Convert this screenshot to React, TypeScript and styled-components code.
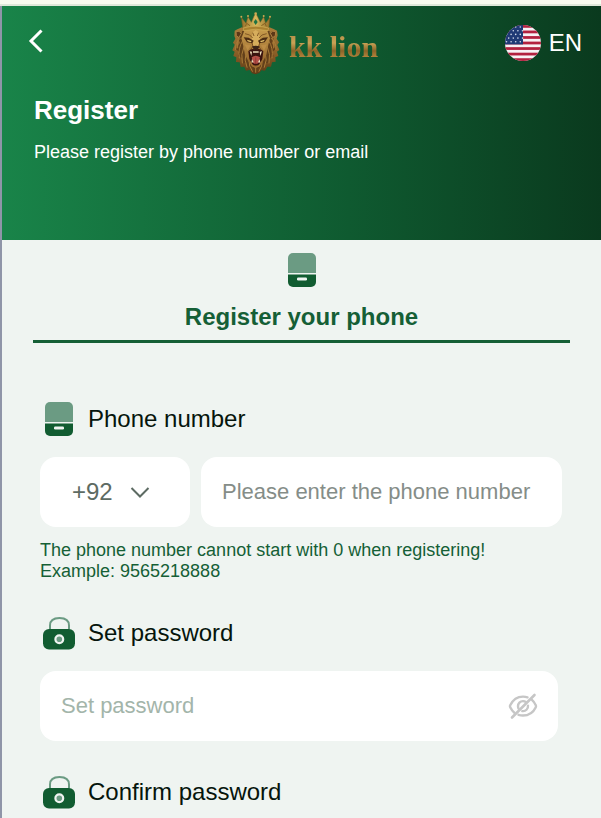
import { useState } from "react";
import type { ReactNode } from "react";
import styled, { createGlobalStyle } from "styled-components";

const GlobalStyle = createGlobalStyle`
  * {
    box-sizing: border-box;
  }
  html {
    overflow-x: hidden;
    scrollbar-width: none;
  }
  body {
    margin: 0;
    background-color: #eff4f1;
    font-family: "Liberation Sans", Arial, sans-serif;
  }
`;

const TopStrip = styled.div`
  height: 6px;
  background-color: #f8fbef;
  border-bottom: 2px solid #dfe8d9;
`;

const Page = styled.div`
  min-height: calc(100vh - 6px);
  border-left: 2px solid #8f95a8;
  background-color: #eff4f1;
`;

const Header = styled.header`
  height: 234px;
  background: linear-gradient(90deg, #198449 0%, #0f5a30 58%, #0a3a1e 100%);
  color: #ffffff;
`;

const NavBar = styled.div`
  display: grid;
  grid-template-columns: 1fr auto 1fr;
  align-items: center;
  height: 74px;
  padding: 0 19px 0 24px;
`;

const BackButton = styled.button`
  justify-self: start;
  display: flex;
  padding: 0 0 4px;
  border: 0;
  background: none;
  color: #ffffff;
  cursor: pointer;
`;

const Logo = styled.div`
  display: flex;
  align-items: center;
  gap: 9px;
  padding-left: 2px;
`;

const LogoText = styled.span`
  padding-top: 8px;
  font-family: "Liberation Serif", serif;
  font-size: 30px;
  line-height: 36px;
  font-weight: bold;
  background: linear-gradient(180deg, #b08a45 25%, #c9a255 50%, #8d6428 68%, #bb8a40 85%);
  background-clip: text;
  color: transparent;
`;

const LanguageButton = styled.button`
  justify-self: end;
  display: flex;
  align-items: center;
  gap: 8px;
  padding: 0;
  border: 0;
  background: none;
  color: #ffffff;
  font-family: inherit;
  font-size: 24px;
  line-height: 36px;
  cursor: pointer;
`;

const Title = styled.h1`
  margin: 0;
  padding: 14px 32px 0;
  font-size: 26px;
  line-height: 32px;
`;

const Subtitle = styled.p`
  margin: 0;
  padding: 14px 32px 0;
  font-size: 18px;
  line-height: 24px;
`;

const Main = styled.main`
  padding: 0 31px 24px;
`;

const TabButton = styled.button`
  display: flex;
  flex-direction: column;
  align-items: center;
  gap: 16px;
  width: 100%;
  padding: 13px 0 9px;
  border: 0;
  border-bottom: 3px solid #155f36;
  background: none;
  color: #155f36;
  font-family: inherit;
  font-size: 24px;
  line-height: 28px;
  font-weight: bold;
  cursor: pointer;
`;

const Form = styled.form`
  padding: 57px 8px 0 7px;
`;

const Field = styled.div`
  margin-bottom: 32px;
`;

const FieldHead = styled.div`
  display: flex;
  align-items: center;
  gap: 13px;
  height: 38px;
  margin-bottom: 19px;
  padding-left: 3px;
`;

const FieldLabel = styled.label`
  color: #06150c;
  font-size: 24px;
  line-height: 30px;
`;

const HeadIcon = styled.span`
  display: flex;
  justify-content: center;
  width: 32px;
`;

const PhoneRow = styled.div`
  display: flex;
  gap: 11px;
`;

const CodeBox = styled.div`
  position: relative;
  flex: 0 0 150px;
`;

const CodeSelect = styled.select`
  width: 100%;
  height: 70px;
  padding: 0 60px 2px 32px;
  border: 0;
  border-radius: 16px;
  background-color: #ffffff;
  color: #5d6b63;
  font-family: inherit;
  font-size: 24px;
  appearance: none;
`;

const CodeArrow = styled.span`
  position: absolute;
  top: 29px;
  right: 40px;
  display: flex;
  pointer-events: none;
`;

const TextInput = styled.input<{ $hintColor: string; $rightPad: string }>`
  flex: 1;
  width: 100%;
  min-width: 0;
  height: 70px;
  padding: 0 ${(props) => props.$rightPad} 0 21px;
  border: 0;
  border-radius: 16px;
  background-color: #ffffff;
  color: #06150c;
  font-family: inherit;
  font-size: 22px;
  &::placeholder {
    color: ${(props) => props.$hintColor};
    opacity: 1;
  }
`;

const Hint = styled.p`
  margin: 13px 0 0;
  color: #155f36;
  font-size: 18px;
  line-height: 21px;
`;

const PasswordBox = styled.div`
  position: relative;
  margin-right: 4px;
`;

const EyeButton = styled.button`
  position: absolute;
  top: 20px;
  right: 20px;
  display: flex;
  padding: 0;
  border: 0;
  background: none;
  cursor: pointer;
`;

const PhoneIcon = () => (
  <svg width="28" height="34" viewBox="0 0 28 34" aria-hidden="true">
    <path d="M5 0h18a5 5 0 0 1 5 5v15H0V5a5 5 0 0 1 5-5z" fill="#6b9b83" />
    <path d="M0 21.500h28V29a5 5 0 0 1-5 5H5a5 5 0 0 1-5-5z" fill="#115c31" />
    <rect x="9" y="24.500" width="10" height="3" rx="1.200" fill="#eff4f1" />
  </svg>
);

const LockIcon = () => (
  <svg width="32" height="34" viewBox="0 0 32 34" aria-hidden="true">
    <path d="M7 13V9.500C7 4.500 10 2 16.500 2S26 4.500 26 9.500V13" fill="none" stroke="#6b9b83" strokeWidth="2" />
    <rect x="0" y="13" width="32" height="20.500" rx="6" fill="#115c31" />
    <circle cx="16.300" cy="23.300" r="3.900" fill="#6b9b83" stroke="#eff4f1" strokeWidth="2.200" />
  </svg>
);

const EyeOffIcon = () => (
  <svg width="30" height="30" viewBox="0 0 30 30" fill="none" stroke="#c6c6c6" strokeWidth="2.400" strokeLinecap="round">
    <path d="M19.500 6.300C18 5.800 16.500 5.600 15 5.600C8.500 5.600 4.500 9.500 2.200 14.300C1.900 15 1.900 15.600 2.200 16.200C3.300 18.400 4.700 20.300 6.400 21.700" />
    <path d="M23.700 8.700C25.400 10.200 26.800 12.200 27.800 14.300C28.100 15 28.100 15.600 27.800 16.200C25.500 21 21.500 24.500 15 24.500C13.300 24.500 11.800 24.200 10.500 23.800" />
    <path d="M17.800 11C17 10.400 16 10.100 15 10.100A5 5 0 0 0 10 15.200C10 16.400 10.300 17.300 10.900 18.100" />
    <path d="M20 14.600A5 5 0 0 1 14.300 20.100" />
    <path d="M26.500 4L4 26.500" strokeWidth="2.600" />
  </svg>
);

const stars = [0, 1, 2, 3, 4].flatMap((row) =>
  [0, 1, 2, 3].map((col) => ({ x: 1.5 + col * 4.6 + (row % 2) * 2.2, y: 2 + row * 3.7 }))
);

const FlagIcon = () => (
  <svg width="36" height="36" viewBox="0 0 36 36" aria-hidden="true">
    <clipPath id="flag">
      <circle cx="18" cy="18" r="18" />
    </clipPath>
    <g clipPath="url(#flag)">
      <rect width="36" height="36" fill="#f7f1f4" />
      {[0, 1, 2, 3, 4, 5, 6].map((i) => (
        <rect key={i} y={(i * 72) / 13} width="36" height={36 / 13} fill="#b3213f" />
      ))}
      <rect width="18" height="19.400" fill="#1f3a75" />
      {stars.map((star) => (
        <circle key={`${star.x}-${star.y}`} cx={star.x} cy={star.y} r="0.800" fill="#d5dcec" />
      ))}
    </g>
  </svg>
);

const LionIcon = () => (
  <svg width="48" height="63" viewBox="0 0 144 189" aria-hidden="true">
    <defs>
      <linearGradient id="mane" x1="0" y1="0" x2="0" y2="1">
        <stop offset="0" stopColor="#a87c38" />
        <stop offset="0.550" stopColor="#8a5f27" />
        <stop offset="1" stopColor="#5f3a16" />
      </linearGradient>
      <linearGradient id="crown" x1="0" y1="0" x2="1" y2="0">
        <stop offset="0" stopColor="#94702a" />
        <stop offset="0.500" stopColor="#d9b95c" />
        <stop offset="1" stopColor="#94702a" />
      </linearGradient>
      <linearGradient id="face" x1="0" y1="0" x2="0" y2="1">
        <stop offset="0" stopColor="#c79c4c" />
        <stop offset="1" stopColor="#8f5f28" />
      </linearGradient>
    </defs>
    <path
      d="M30 46L16 52L8 56L7 72L10 80L3 92L8 98L1 115L8 119L4 132L13 136L12 150L23 151L26 165L37 164L42 176L53 174L60 184L71 187L82 183L88 175L99 176L106 164L117 164L120 151L131 149L130 136L139 132L135 119L142 114L136 99L141 91L134 80L137 70L135 56L125 51L112 46z"
      fill="url(#mane)"
    />
    <path
      d="M31 57L18 81L24 92L12 112L22 120L18 133L31 139L32 154L43 153L48 168L58 163L70 181L83 163L94 168L99 153L111 152L112 139L125 133L121 120L131 112L119 93L126 81L112 57z"
      fill="#63401a"
    />
    <g fill="none" stroke="#a97b38" strokeWidth="3" strokeLinecap="round">
      <path d="M28 62Q14 82 17 108M24 79Q8 94 10 113M32 86Q17 109 22 138M36 104Q25 127 31 153M42 123Q35 144 45 166M51 145Q50 163 61 178" />
      <path d="M114 62Q128 82 125 108M118 79Q134 94 132 113M110 86Q125 109 120 138M106 104Q117 127 111 153M100 123Q107 144 97 166M91 145Q92 163 81 178M71 165V181" />
    </g>
    <path d="M12 59Q22 54 28 64L21 77L13 71z" fill="#5c3817" stroke="#ab8042" strokeWidth="3" />
    <path d="M131 59Q121 54 115 64L122 77L130 71z" fill="#5c3817" stroke="#ab8042" strokeWidth="3" />
    <path
      d="M37 56Q71 43 106 56L114 79L108 102L103 128L92 150L83 162L71 168L59 162L50 150L39 128L34 102L28 79z"
      fill="url(#face)"
    />
    <path d="M62 60L59 78L62 104H80L84 78L80 60L71 54z" fill="#d6ad5c" />
    <path d="M39 65L53 69L62 78M104 65L90 69L81 78M62 62L66 72M80 62L76 72" fill="none" stroke="#845a25" strokeWidth="3" />
    <path d="M35 76L50 77L65 86L61 94L45 91z" fill="#4b2c12" />
    <path d="M108 76L93 77L78 86L82 94L98 91z" fill="#4b2c12" />
    <path d="M45 83L59 87L56 91L47 88zM98 83L84 87L87 91L96 88z" fill="#e0bd68" />
    <path d="M38 97L56 100L47 116zM105 97L87 100L96 116z" fill="#bd8d45" />
    <path d="M60 93L63 103L57 111M83 93L80 103L86 111" fill="none" stroke="#7a4d20" strokeWidth="3" />
    <path d="M60 103Q71 99 83 103L78 112L71 115L65 112z" fill="#3c2418" />
    <path d="M71 113Q57 108 49 118L52 140L60 157Q71 164 83 157L91 140L94 118Q85 108 71 113z" fill="#3a130f" />
    <path d="M59 136Q71 126 84 136L80 152Q71 159 63 152z" fill="#b54f47" />
    <path d="M71 136V154" stroke="#843331" strokeWidth="2" />
    <path d="M53 118L60 119L58 132zM90 118L83 119L85 132zM58 152L60 141L65 151zM85 152L83 141L78 151zM63 118H80V122H63z" fill="#eadbb9" />
    <path d="M54 149L62 162L71 166L81 162L89 149" fill="none" stroke="#a37232" strokeWidth="4" />
    <path
      d="M33 53L28 16L42 34L48 14L58 31L66 12L71 4L76 12L85 31L95 14L101 34L114 16L110 53Q71 44 33 53z"
      fill="url(#crown)"
      stroke="#7a5820"
      strokeWidth="1.500"
    />
    <path d="M40 43L44 34L54 41M88 41L99 34L103 43" fill="none" stroke="#886222" strokeWidth="3" />
    <path d="M33 48Q71 38 110 48L108 56Q71 47 35 56z" fill="#aa812f" stroke="#d2af58" strokeWidth="2" />
    <path d="M71 21L77 30L71 39L65 30z" fill="#1f7343" />
    <g fill="#cda852">
      <circle cx="28" cy="14" r="3" />
      <circle cx="48" cy="12" r="3" />
      <circle cx="71" cy="5" r="4" />
      <circle cx="95" cy="12" r="3" />
      <circle cx="114" cy="14" r="3" />
    </g>
  </svg>
);

interface PropsHead {
  id: string;
  icon: ReactNode;
  label: string;
}

interface PropsPassword {
  id: string;
  label: string;
}

const Head = ({ id, icon, label }: PropsHead) => (
  <FieldHead>
    <HeadIcon>{icon}</HeadIcon>
    <FieldLabel htmlFor={id}>{label}</FieldLabel>
  </FieldHead>
);

const PasswordField = ({ id, label }: PropsPassword) => {
  const [visible, setVisible] = useState(false);

  return (
    <Field>
      <Head id={id} icon={<LockIcon />} label={label} />
      <PasswordBox>
        <TextInput
          id={id}
          type={visible ? "text" : "password"}
          placeholder={label}
          $hintColor="#a3b5aa"
          $rightPad="60px"
        />
        <EyeButton type="button" aria-label="Show password" onClick={() => setVisible(!visible)}>
          <EyeOffIcon />
        </EyeButton>
      </PasswordBox>
    </Field>
  );
};

const App = () => {
  const [code, setCode] = useState("+92");

  return (
    <>
      <GlobalStyle />
      <TopStrip />
      <Page>
        <Header>
          <NavBar>
            <BackButton type="button" aria-label="Back">
              <svg width="20" height="26" viewBox="0 0 20 26" fill="none" stroke="currentColor" strokeWidth="3">
                <path d="M15.500 2.500L5 13L15.500 23.500" />
              </svg>
            </BackButton>
            <Logo>
              <LionIcon />
              <LogoText>kk lion</LogoText>
            </Logo>
            <LanguageButton type="button">
              <FlagIcon />
              EN
            </LanguageButton>
          </NavBar>
          <Title>Register</Title>
          <Subtitle>Please register by phone number or email</Subtitle>
        </Header>
        <Main>
          <TabButton type="button">
            <PhoneIcon />
            Register your phone
          </TabButton>
          <Form>
            <Field>
              <Head id="phone" icon={<PhoneIcon />} label="Phone number" />
              <PhoneRow>
                <CodeBox>
                  <CodeSelect aria-label="Country code" value={code} onChange={(e) => setCode(e.target.value)}>
                    <option>+92</option>
                  </CodeSelect>
                  <CodeArrow>
                    <svg width="20" height="13" viewBox="0 0 20 13" fill="none" stroke="#5d6b63" strokeWidth="2">
                      <path d="M1.500 2L10 10.500L18.500 2" />
                    </svg>
                  </CodeArrow>
                </CodeBox>
                <TextInput
                  id="phone"
                  type="tel"
                  placeholder="Please enter the phone number"
                  $hintColor="#858d88"
                  $rightPad="16px"
                />
              </PhoneRow>
              <Hint>
                The phone number cannot start with 0 when registering!
                <br />
                Example: 9565218888
              </Hint>
            </Field>
            <PasswordField id="password" label="Set password" />
            <PasswordField id="confirm" label="Confirm password" />
          </Form>
        </Main>
      </Page>
    </>
  );
};

export default App;
